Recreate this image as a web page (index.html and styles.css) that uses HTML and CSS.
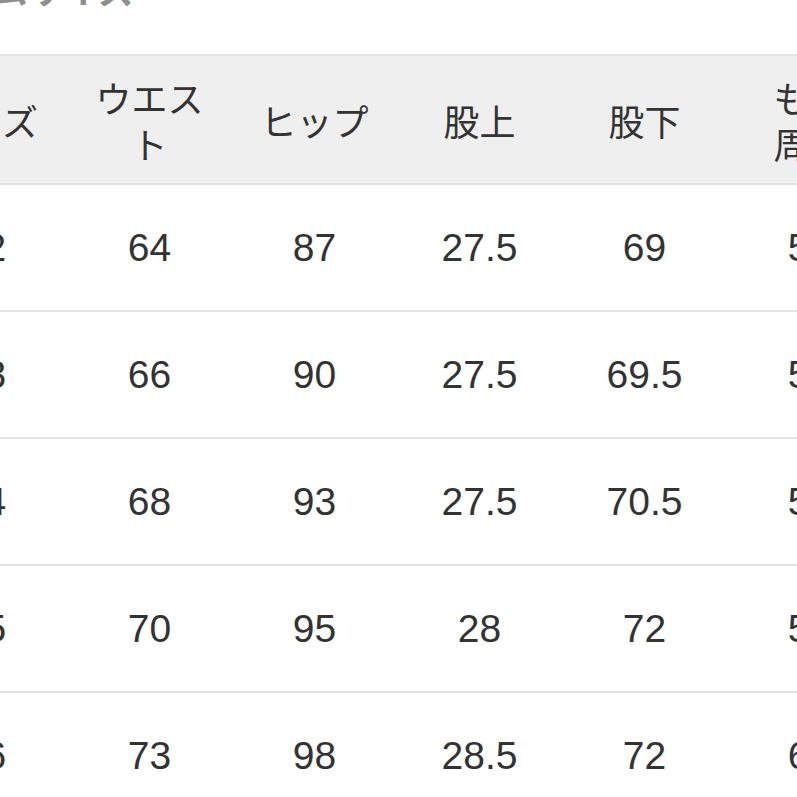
FILE: index.html
```html
<!DOCTYPE html>
<html lang="ja">
<head>
<meta charset="utf-8">
<title>サイズ</title>
<link rel="stylesheet" href="styles.css">
</head>
<body>
<div class="title">アイテムサイズ</div>
<table class="size-table">
  <thead>
    <tr>
      <th>サイズ</th>
      <th>ウエスト</th>
      <th>ヒップ</th>
      <th>股上</th>
      <th>股下</th>
      <th>もも<br>周り</th>
      <th>裾幅</th>
    </tr>
  </thead>
  <tbody>
    <tr><td>22</td><td>64</td><td>87</td><td>27.5</td><td>69</td><td>55</td><td>17</td></tr>
    <tr><td>23</td><td>66</td><td>90</td><td>27.5</td><td>69.5</td><td>56</td><td>17.5</td></tr>
    <tr><td>24</td><td>68</td><td>93</td><td>27.5</td><td>70.5</td><td>57</td><td>18</td></tr>
    <tr><td>25</td><td>70</td><td>95</td><td>28</td><td>72</td><td>58</td><td>18.5</td></tr>
    <tr><td>26</td><td>73</td><td>98</td><td>28.5</td><td>72</td><td>60</td><td>19</td></tr>
  </tbody>
</table>
</body>
</html>
```
FILE: styles.css
```css
html, body {
  margin: 0;
  padding: 0;
  background: #ffffff;
  overflow: hidden;
}

body {
  width: 797px;
  height: 797px;
  font-family: "Liberation Sans", "Noto Sans CJK JP", sans-serif;
  color: #333333;
}

.title {
  font-family: "Noto Sans CJK JP", sans-serif;
  font-weight: 700;
  font-size: 36px;
  line-height: 36px;
  color: #8e8e8e;
  margin-top: -30px;
  margin-left: -113px;
  white-space: nowrap;
}

.size-table {
  margin-top: 48px;
  margin-left: -98px;
  border-collapse: collapse;
  table-layout: fixed;
  width: 1155px;
}

.size-table th,
.size-table td {
  width: 165px;
  padding: 0 15px;
  box-sizing: border-box;
  text-align: center;
  vertical-align: middle;
  border-bottom: 2px solid #e3e3e3;
}

.size-table th {
  font-family: "Noto Sans CJK JP", sans-serif;
  font-weight: 400;
  font-size: 36px;
  line-height: 46px;
  height: 129px;
  background: #efefef;
  border-top: 2px solid #e3e3e3;
  color: #333333;
}

.size-table td {
  font-size: 39px;
  height: 127px;
}
```
